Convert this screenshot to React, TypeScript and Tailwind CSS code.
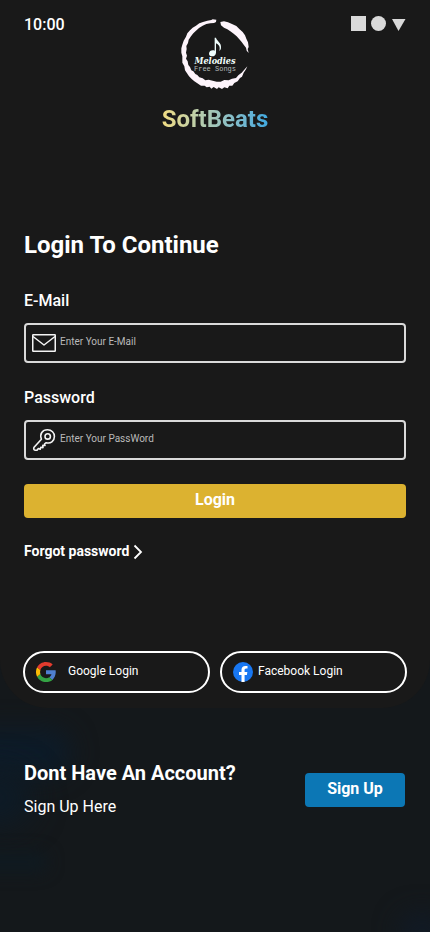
import React from "react";

function Logo() {
  return (
    <div className="relative h-[70px] w-[68px]">
      <svg viewBox="33 27 204 210" className="h-full w-full" aria-hidden="true">
        <g fill="#fdf4fb">
          <path d="M139 29 L128 28 L124 30 L112 32 L99 36 L88 40 L78 47 L68 53 L60 61 L52 70 L48 80 L41 92 L37 104 L34 115 L34 128 L37 139 L37 158 L43 169 L45 181 L51 190 L57 199 L65 207 L73 214 L82 220 L93 227 L104 227 L110 232 L119 230 L124 236 L131 231 L141 237 L146 232 L156 237 L163 232 L173 235 L178 227 L187 227 L193 219 L203 214 L210 204 L216 200 L221 188 L228 178 L232 169 L224 178 L215 188 L205 196 L198 204 L186 206 L176 211 L163 210 L152 215 L140 215 L128 212 L116 209 L106 211 L98 205 L88 202 L82 195 L76 192 L70 184 L64 181 L60 171 L55 165 L53 154 L48 146 L51 137 L48 128 L50 117 L49 108 L54 99 L56 89 L63 79 L70 70 L78 62 L87 54 L98 47 L109 42 L121 40 L132 39 L138 36 Z" />
          <path d="M151 36 L162 34 L174 37 L186 42 L199 48 L208 57 L218 66 L225 76 L229 86 L234 97 L236 111 L233 117 L236 129 L230 122 L228 113 L221 104 L215 96 L208 88 L200 79 L191 71 L181 64 L172 58 L162 53 L153 46 Z" />
        </g>
        <g fill="#eefcfb">
          <path d="M134 83h4c2 11 17 14 15 30c0 5-3 8-5 9c4-12-3-19-10-22v28c0 14-21 14-21 3c0-9 10-12 17-9z" />
        </g>
      </svg>
      <div className="absolute inset-x-0 top-[37px] flex flex-col items-center text-center text-[#f3fffc]">
        <span className="font-['DejaVu_Serif_Condensed','DejaVu_Serif',serif] text-[9px] leading-[10px] font-bold italic">
          Melodies
        </span>
        <span className="font-['Liberation_Mono',monospace] text-[7px] leading-[7px] text-[#b5bcba]">Free Songs</span>
      </div>
    </div>
  );
}

function MailIcon() {
  return (
    <svg viewBox="0 0 24 20" className="h-5 w-6 shrink-0" fill="none" stroke="#f4f4f4" strokeWidth="1.5" strokeLinejoin="round" aria-hidden="true">
      <rect x="0.75" y="1.75" width="22.5" height="16.5" rx="0.5" />
      <path d="M1 3.5 L12 12 L23 3.5" />
    </svg>
  );
}

function KeyIcon() {
  return (
    <svg viewBox="0 0 24 24" className="h-6 w-6 shrink-0" fill="none" stroke="#f4f4f4" strokeWidth="1.6" strokeLinejoin="round" strokeLinecap="round" aria-hidden="true">
      <path d="M9.400 11.200 C7.400 5.800 10.400 1.800 15.500 1.800 C19.700 1.800 22.400 4.800 22.400 8.400 C22.400 13.200 18.500 16 14.200 14.700 L12.600 15.800 L13 17.400 L10.800 17.400 L11 19.600 L8.800 19.300 L8.200 21.200 L6.400 20.500 L5 22.200 L3.200 22.300 C1.800 22 1.300 20.600 2.100 19.200 Z" />
      <circle cx="15.700" cy="8.400" r="2.700" />
    </svg>
  );
}

function GoogleIcon() {
  return (
    <svg viewBox="2 2 20 20" className="h-5 w-5 shrink-0" aria-hidden="true">
      <path fill="#4f7fd0" d="M21.6 10.2H12v4h5.5c-.5 1.4-1.2 2.4-2.3 3.1l3.2 2.6c2.4-2.1 3.8-5.600 3.200-9.700z" />
      <path fill="#34a344" d="M12 22c2.600 0 4.800-.8 6.400-2.100l-3.200-2.600c-.9.6-2 .9-3.200.9-2.600 0-4.800-1.700-5.600-4.100l-3.300 2.600C4.700 19.800 8.100 22 12 22z" />
      <path fill="#fbbc05" d="M6.400 14.100c-.4-1.400-.4-2.800 0-4.200L3.100 7.300c-1.500 3-1.500 6.400 0 9.400z" />
      <path fill="#e33b2e" d="M12 5.800c1.500 0 2.800.5 3.800 1.500l2.900-2.900C16.900 2.800 14.600 2 12 2 8.100 2 4.700 4.200 3.100 7.300l3.300 2.600C7.200 7.500 9.400 5.800 12 5.800z" />
    </svg>
  );
}

function FacebookIcon() {
  return (
    <svg viewBox="0 0 24 24" className="h-5 w-5 shrink-0" aria-hidden="true">
      <circle cx="12" cy="12" r="12" fill="#1877f2" />
      <path fill="#fff" d="M16.700 15.500l.5-3.500h-3.300V9.800c0-.9.5-1.900 1.900-1.900h1.600v-3s-1.400-.2-2.700-.2c-2.700 0-4.500 1.700-4.500 4.700V12h-3v3.500h3V24h3.700v-8.500z" />
    </svg>
  );
}

type FieldProps = {
  id: string;
  label: string;
  type: string;
  placeholder: string;
  icon: React.ReactNode;
};

function Field({ id, label, type, placeholder, icon }: FieldProps) {
  return (
    <div className="flex flex-col gap-2.5">
      <label htmlFor={id} className="text-base leading-6 font-medium">
        {label}
      </label>
      <div className="flex h-10 items-center gap-1 rounded border-2 border-[#d9d9d9] px-1.5">
        {icon}
        <input
          id={id}
          type={type}
          placeholder={placeholder}
          className="min-w-0 flex-1 bg-transparent pb-0.5 text-[10px] leading-4 outline-none placeholder:text-[#b9b9b9]"
        />
      </div>
    </div>
  );
}

export default function App() {
  return (
    <div className="relative isolate min-h-screen overflow-hidden bg-[#14181b] font-[Roboto,sans-serif] text-white">
      <div className="absolute top-[728px] -left-10 -z-10 h-12 w-28 rounded-full bg-[#0d1b28] blur-md" />
      <div className="absolute top-[770px] -left-12 -z-10 h-14 w-20 rounded-full bg-[#0d1b27] blur-lg" />
      <div className="absolute top-[852px] -left-12 -z-10 h-5 w-24 rounded-full bg-[#0f1a21] blur-sm" />
      <div className="absolute top-[912px] -right-4 -z-10 h-10 w-12 rounded-full bg-[#111a25] blur-md" />

      <main className="rounded-b-[48px] bg-[#191919] px-6 pb-[15px]">
        <header className="grid grid-cols-[1fr_auto_1fr] pt-[19px]">
          <time className="-mt-1.5 text-base leading-6 font-medium">10:00</time>
          <Logo />
          <svg viewBox="0 0 56 16" className="-mt-1 h-4 w-14 justify-self-end" fill="#d9d9d9" aria-hidden="true">
            <rect x="1" y="1" width="15" height="15" />
            <circle cx="28.500" cy="8.500" r="7.500" />
            <path d="M42 4h13.500L48.500 16z" />
          </svg>
        </header>

        <div className="mt-3.5 flex justify-center">
          <span className="bg-linear-to-r from-[#f0dc82] to-[#3fa9e0] bg-clip-text text-2xl leading-8 font-bold text-transparent">
            SoftBeats
          </span>
        </div>

        <h1 className="mt-[94px] text-2xl leading-8 font-bold">Login To Continue</h1>

        <form className="mt-7 flex flex-col" onSubmit={(event) => event.preventDefault()}>
          <div className="flex flex-col gap-[23px]">
            <Field id="email" label="E-Mail" type="email" placeholder="Enter Your E-Mail" icon={<MailIcon />} />
            <Field id="password" label="Password" type="password" placeholder="Enter Your PassWord" icon={<KeyIcon />} />
          </div>
          <button type="submit" className="mt-6 h-[34px] rounded bg-[#dcb230] pb-0.5 text-base leading-6 font-bold">
            Login
          </button>
        </form>

        <a href="#forgot" className="mt-[23px] inline-flex items-center gap-1 text-sm leading-5 font-bold">
          Forgot password
          <svg viewBox="0 0 10 16" className="mt-0.5 h-4 w-2.5" fill="none" stroke="#fff" strokeWidth="1.8" aria-hidden="true">
            <path d="M1.500 1.500 L8 8 L1.500 14.500" />
          </svg>
        </a>

        <div className="-mx-px mt-[88px] grid grid-cols-2 gap-2.5">
          <button type="button" className="flex h-[42px] items-center gap-3 rounded-full border-2 border-white pl-[11px] text-xs">
            <GoogleIcon />
            <span className="pb-0.5">Google Login</span>
          </button>
          <button type="button" className="flex h-[42px] items-center gap-[5px] rounded-full border-2 border-white pl-[11px] text-xs">
            <FacebookIcon />
            <span className="pb-0.5">Facebook Login</span>
          </button>
        </div>
      </main>

      <footer className="flex items-end justify-between gap-4 pt-[51px] pr-[25px] pb-12 pl-6">
        <div>
          <h2 className="text-xl leading-7 font-bold">Dont Have An Account?</h2>
          <p className="mt-2 text-base leading-6">Sign Up Here</p>
        </div>
        <button type="button" className="mb-3 h-[34px] w-[100px] rounded bg-[#0c77b5] pb-0.5 text-base leading-6 font-bold">
          Sign Up
        </button>
      </footer>
    </div>
  );
}
